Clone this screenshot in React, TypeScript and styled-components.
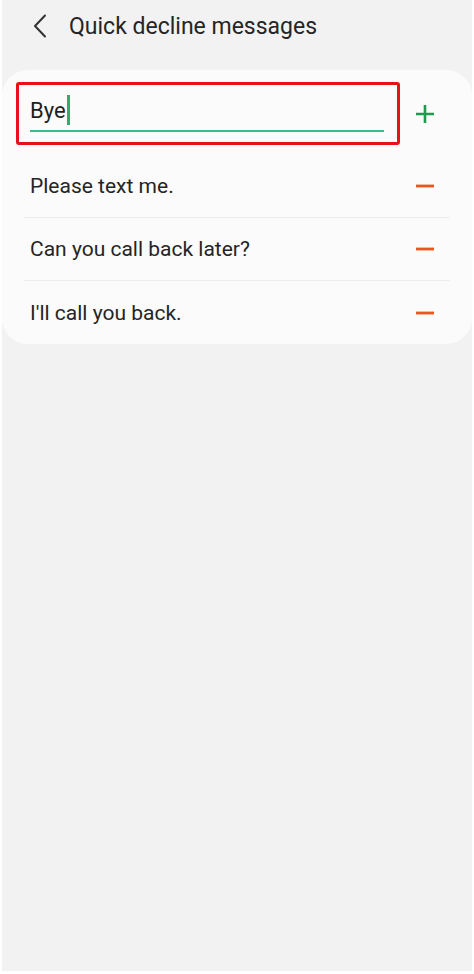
import * as React from 'react';
import styled, { createGlobalStyle } from 'styled-components';

const GlobalStyle = createGlobalStyle`
  *, *::before, *::after {
    box-sizing: border-box;
  }
  html, body {
    margin: 0;
    padding: 0;
    background: #ffffff;
  }
  body {
    font-family: Roboto, "Noto Sans", "Liberation Sans", sans-serif;
  }
`;

const Screen = styled.div`
  margin-left: 2px;
  width: 470px;
  height: 971px;
  background: #f2f2f2;
  display: flex;
  flex-direction: column;
`;

const TopBar = styled.header`
  height: 52px;
  display: flex;
  align-items: center;
  padding-left: 28px;
  gap: 19px;
`;

const BackButton = styled.button`
  border: 0;
  background: none;
  padding: 0;
  width: 20px;
  height: 28px;
  display: flex;
  align-items: center;
  justify-content: center;
  color: #333;
`;

const Title = styled.h1`
  margin: 0;
  font-size: 23px;
  font-weight: 400;
  color: #252525;
`;

const Card = styled.section`
  margin-top: 18px;
  background: #fbfbfb;
  border-radius: 26px;
  padding: 12px 0 0;
  display: flex;
  flex-direction: column;
`;

const InputRow = styled.div`
  display: flex;
  align-items: center;
  padding: 0 22px 0 14px;
  gap: 14px;
`;

const Highlight = styled.div`
  flex: 1;
  height: 63px;
  border: 3px solid #e8101a;
  border-radius: 3px;
  padding: 0 13px 10px 11px;
  display: flex;
  flex-direction: column;
  justify-content: flex-end;
`;

const Field = styled.div`
  display: flex;
  align-items: center;
  height: 38px;
  border-bottom: 2px solid #3fba8a;
  font-size: 22px;
  color: #1f1f1f;
  padding-bottom: 4px;
`;

const Caret = styled.span`
  display: inline-block;
  width: 3px;
  height: 30px;
  margin-left: 1px;
  background: #2eae6c;
`;

const Rows = styled.ul`
  list-style: none;
  margin: 10px 0 0;
  padding: 0 22px;
`;

const Row = styled.li<{ $last?: boolean }>`
  height: 63px;
  display: flex;
  align-items: center;
  justify-content: space-between;
  padding-left: 6px;
  border-bottom: ${p => (p.$last ? 'none' : '1px solid #ececec')};
  font-size: 21px;
  color: #252525;
`;

const IconButton = styled.button`
  border: 0;
  background: none;
  padding: 0;
  width: 22px;
  height: 22px;
  display: flex;
  align-items: center;
  justify-content: center;
  margin-right: 14px;
`;

const messages = ['Please text me.', 'Can you call back later?', "I'll call you back."];

const App = () => (
  <>
    <GlobalStyle />
    <Screen>
      <TopBar>
        <BackButton aria-label="Back">
          <svg width="14" height="24" viewBox="0 0 14 24" fill="none">
            <path d="M12 1.5 L2 12 L12 22.5" stroke="#333" strokeWidth="2" strokeLinecap="round" strokeLinejoin="round" />
          </svg>
        </BackButton>
        <Title>Quick decline messages</Title>
      </TopBar>
      <Card>
        <InputRow>
          <Highlight>
            <Field>
              Bye
              <Caret />
            </Field>
          </Highlight>
          <IconButton aria-label="Add">
            <svg width="20" height="20" viewBox="0 0 20 20">
              <path d="M10 1 V19 M1 10 H19" stroke="#1f9a4e" strokeWidth="2.6" />
            </svg>
          </IconButton>
        </InputRow>
        <Rows>
          {messages.map((m, i) => (
            <Row key={m} $last={i === messages.length - 1}>
              {m}
              <IconButton aria-label="Remove">
                <svg width="20" height="20" viewBox="0 0 20 20">
                  <path d="M1 10 H19" stroke="#e9561e" strokeWidth="2.8" />
                </svg>
              </IconButton>
            </Row>
          ))}
        </Rows>
      </Card>
    </Screen>
  </>
);

export default App;
